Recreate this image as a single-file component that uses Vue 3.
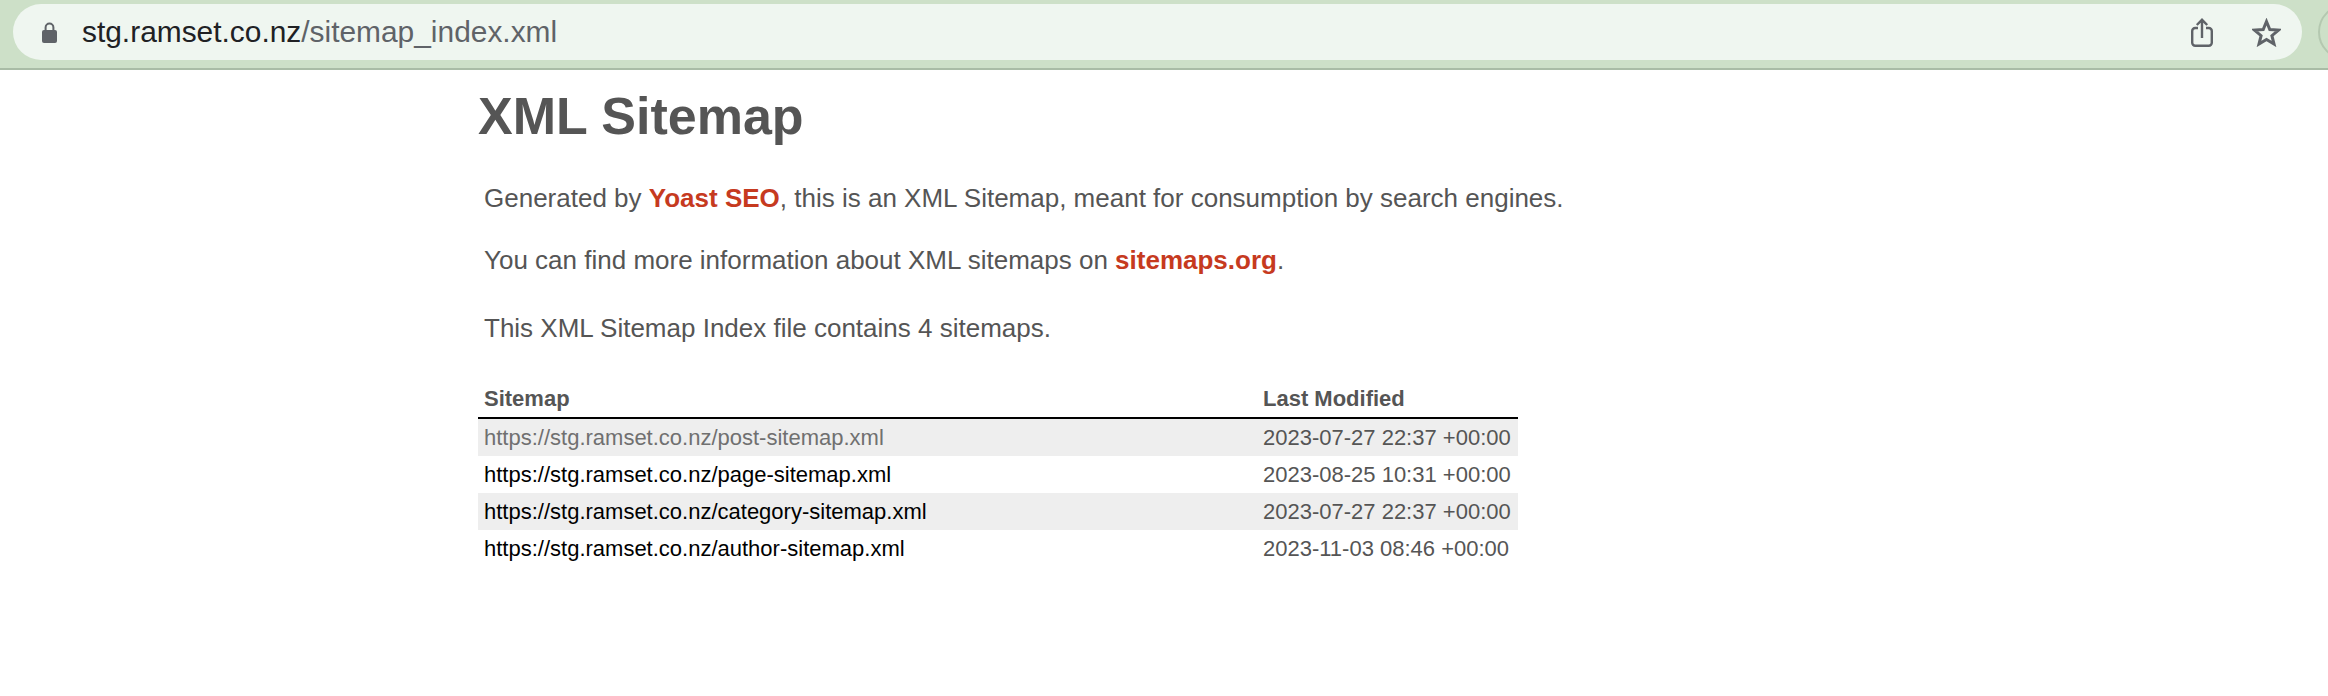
<script setup>
const rows = [
  { url: 'https://stg.ramset.co.nz/post-sitemap.xml', date: '2023-07-27 22:37 +00:00', visited: true },
  { url: 'https://stg.ramset.co.nz/page-sitemap.xml', date: '2023-08-25 10:31 +00:00' },
  { url: 'https://stg.ramset.co.nz/category-sitemap.xml', date: '2023-07-27 22:37 +00:00' },
  { url: 'https://stg.ramset.co.nz/author-sitemap.xml', date: '2023-11-03 08:46 +00:00' }
]
</script>

<template>
  <div class="page">
    <header class="toolbar">
      <div class="omnibox">
        <svg class="lock" width="15" height="21" viewBox="0 0 15 21">
          <path d="M3.600 9V5.400a3.900 3.900 0 0 1 7.800 0V9" fill="none" stroke="#5f6368" stroke-width="2" />
          <rect x="0" y="8" width="15" height="13" rx="2" fill="#5f6368" />
        </svg>
        <span class="address"><span class="host">stg.ramset.co.nz</span>/sitemap_index.xml</span>
        <svg class="share" width="22" height="29" viewBox="0 0 22 29" fill="none" stroke="#5f6368" stroke-width="2.400">
          <path d="M7 10H4.200a3 3 0 0 0-3 3v11.800a3 3 0 0 0 3 3h13.600a3 3 0 0 0 3-3V13a3 3 0 0 0-3-3H15" />
          <path d="M11 20V2M5.800 7 11 1.800 16.200 7" />
        </svg>
        <svg class="star" width="29" height="29" viewBox="0 0 29 29" fill="none" stroke="#5f6368" stroke-width="3">
          <path d="M14.500 3.500 17.800 11.500 26.500 12.100 19.900 17.700 22 26 14.500 21.500 7 26 9.100 17.700 2.500 12.100 11.200 11.500Z" />
        </svg>
      </div>
      <div class="avatar"></div>
    </header>
    <main class="content">
      <h1>XML Sitemap</h1>
      <p class="intro first">Generated by <a class="brand">Yoast SEO</a>, this is an XML Sitemap, meant for consumption by search engines.</p>
      <p class="intro second">You can find more information about XML sitemaps on <a class="brand">sitemaps.org</a>.</p>
      <p class="intro third">This XML Sitemap Index file contains 4 sitemaps.</p>
      <div class="table">
        <div class="row head">
          <div>Sitemap</div>
          <div>Last Modified</div>
        </div>
        <div v-for="row in rows" :key="row.url" class="row">
          <div><a class="link" :class="{ visited: row.visited }">{{ row.url }}</a></div>
          <div class="date">{{ row.date }}</div>
        </div>
      </div>
    </main>
  </div>
</template>

<style>
html, body { background: #fff; }
</style>

<style scoped>
.page {
  width: 2328px;
  height: 696px;
  overflow: hidden;
  background: #fff;
  font-family: "Liberation Sans", Arial, sans-serif;
  color: #555;
}
.toolbar {
  height: 70px;
  box-sizing: border-box;
  padding: 4px 0 0 13px;
  background: #cde0c8;
  border-bottom: 2px solid #a9bca6;
  display: flex;
  overflow: hidden;
  gap: 16px;
}
.omnibox {
  flex: none;
  width: 2289px;
  height: 56px;
  box-sizing: border-box;
  border-radius: 28px;
  background: #eff6f0;
  display: flex;
  align-items: center;
  padding-left: 29px;
  padding-right: 21px;
}
.lock { flex: none; }
.address {
  margin-left: 25px;
  font-size: 29.9px;
  color: #5f6368;
  flex: 1;
}
.host { color: #202124; }
.share { margin-right: 39px; margin-top: 1px; }
.avatar {
  flex: none;
  width: 56px;
  height: 56px;
  box-sizing: border-box;
  border: 2px solid #b4c8b0;
  border-radius: 50%;
}
.content {
  width: 1040px;
  margin-left: 478px;
}
h1 {
  margin: 16px 0 0;
  font-size: 52px;
  line-height: 60px;
  font-weight: 700;
}
.intro {
  margin: 0 0 0 6px;
  font-size: 26px;
  line-height: 32px;
  white-space: nowrap;
}
.first { margin-top: 36px; }
.second { margin-top: 30px; }
.third { margin-top: 36px; }
.brand {
  color: #c63a1f;
  font-weight: 700;
}
.table {
  margin-top: 37px;
}
.row {
  display: grid;
  grid-template-columns: 779px 1fr;
  height: 37px;
  align-items: center;
  padding-left: 6px;
  font-size: 22px;
}
.row:nth-child(even) { background: #eee; }
.head {
  border-bottom: 2px solid #000;
  height: 36px;
  font-weight: 700;
}
.link { color: #000; }
.visited { color: #707070; }
</style>
